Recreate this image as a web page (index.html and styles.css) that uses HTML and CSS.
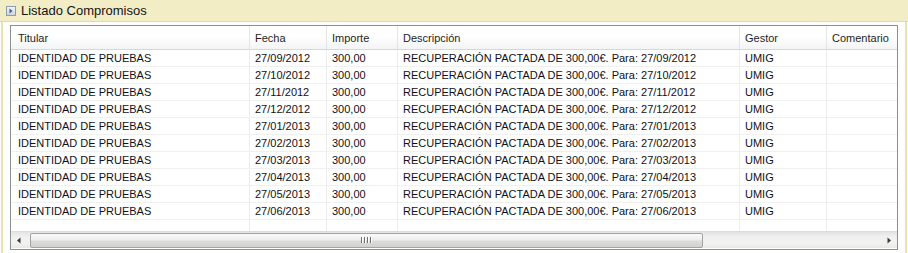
FILE: index.html
```html
<!DOCTYPE html>
<html lang="es">
<head>
<meta charset="utf-8">
<title>Listado Compromisos</title>
<link rel="stylesheet" href="styles.css">
</head>
<body>
<div class="panel">
  <div class="panel-head">
    <svg class="expander" width="10" height="10" viewBox="0 0 10 10">
      <defs>
        <linearGradient id="eg" x1="0" y1="0" x2="0" y2="1">
          <stop offset="0" stop-color="#f4f7fb"/>
          <stop offset="1" stop-color="#c9d3e2"/>
        </linearGradient>
      </defs>
      <rect x="0.5" y="0.5" width="9" height="9" fill="url(#eg)" stroke="#8d9bb3"/>
      <path d="M3.5 2.5 L6.5 5 L3.5 7.5 Z" fill="#4d5d7c"/>
    </svg>
    <span class="panel-title">Listado Compromisos</span>
  </div>
  <div class="panel-body">
    <div class="grid">
      <div class="row head">
        <div class="cell c1">Titular</div>
        <div class="cell">Fecha</div>
        <div class="cell">Importe</div>
        <div class="cell">Descripción</div>
        <div class="cell">Gestor</div>
        <div class="cell last">Comentario</div>
      </div>
      <div class="row"><div class="cell c1">IDENTIDAD DE PRUEBAS</div><div class="cell">27/09/2012</div><div class="cell">300,00</div><div class="cell">RECUPERACIÓN PACTADA DE 300,00€. Para: 27/09/2012</div><div class="cell">UMIG</div><div class="cell last"></div></div>
      <div class="row"><div class="cell c1">IDENTIDAD DE PRUEBAS</div><div class="cell">27/10/2012</div><div class="cell">300,00</div><div class="cell">RECUPERACIÓN PACTADA DE 300,00€. Para: 27/10/2012</div><div class="cell">UMIG</div><div class="cell last"></div></div>
      <div class="row"><div class="cell c1">IDENTIDAD DE PRUEBAS</div><div class="cell">27/11/2012</div><div class="cell">300,00</div><div class="cell">RECUPERACIÓN PACTADA DE 300,00€. Para: 27/11/2012</div><div class="cell">UMIG</div><div class="cell last"></div></div>
      <div class="row"><div class="cell c1">IDENTIDAD DE PRUEBAS</div><div class="cell">27/12/2012</div><div class="cell">300,00</div><div class="cell">RECUPERACIÓN PACTADA DE 300,00€. Para: 27/12/2012</div><div class="cell">UMIG</div><div class="cell last"></div></div>
      <div class="row"><div class="cell c1">IDENTIDAD DE PRUEBAS</div><div class="cell">27/01/2013</div><div class="cell">300,00</div><div class="cell">RECUPERACIÓN PACTADA DE 300,00€. Para: 27/01/2013</div><div class="cell">UMIG</div><div class="cell last"></div></div>
      <div class="row"><div class="cell c1">IDENTIDAD DE PRUEBAS</div><div class="cell">27/02/2013</div><div class="cell">300,00</div><div class="cell">RECUPERACIÓN PACTADA DE 300,00€. Para: 27/02/2013</div><div class="cell">UMIG</div><div class="cell last"></div></div>
      <div class="row"><div class="cell c1">IDENTIDAD DE PRUEBAS</div><div class="cell">27/03/2013</div><div class="cell">300,00</div><div class="cell">RECUPERACIÓN PACTADA DE 300,00€. Para: 27/03/2013</div><div class="cell">UMIG</div><div class="cell last"></div></div>
      <div class="row"><div class="cell c1">IDENTIDAD DE PRUEBAS</div><div class="cell">27/04/2013</div><div class="cell">300,00</div><div class="cell">RECUPERACIÓN PACTADA DE 300,00€. Para: 27/04/2013</div><div class="cell">UMIG</div><div class="cell last"></div></div>
      <div class="row"><div class="cell c1">IDENTIDAD DE PRUEBAS</div><div class="cell">27/05/2013</div><div class="cell">300,00</div><div class="cell">RECUPERACIÓN PACTADA DE 300,00€. Para: 27/05/2013</div><div class="cell">UMIG</div><div class="cell last"></div></div>
      <div class="row"><div class="cell c1">IDENTIDAD DE PRUEBAS</div><div class="cell">27/06/2013</div><div class="cell">300,00</div><div class="cell">RECUPERACIÓN PACTADA DE 300,00€. Para: 27/06/2013</div><div class="cell">UMIG</div><div class="cell last"></div></div>
      <div class="row filler">
        <div class="cell c1"></div><div class="cell"></div><div class="cell"></div><div class="cell"></div><div class="cell"></div><div class="cell last"></div>
      </div>
      <div class="hscroll">
        <div class="sb-btn">
          <svg width="17" height="17" viewBox="0 0 17 17"><path d="M9.5 5.5 L6 8.5 L9.5 11.5 Z" fill="#3a3a3a"/></svg>
        </div>
        <div class="sb-track">
          <div class="sb-thumb">
            <span class="grip"></span><span class="grip"></span><span class="grip"></span><span class="grip"></span>
          </div>
        </div>
        <div class="sb-btn">
          <svg width="17" height="17" viewBox="0 0 17 17"><path d="M7.5 5.5 L11 8.5 L7.5 11.5 Z" fill="#3a3a3a"/></svg>
        </div>
      </div>
    </div>
  </div>
</div>
</body>
</html>
```
FILE: styles.css
```css
* { box-sizing: border-box; }
html, body {
  margin: 0;
  padding: 0;
  background: #ffffff;
}
body {
  font-family: "Liberation Sans", Arial, sans-serif;
  width: 908px;
  height: 253px;
  overflow: hidden;
}
.panel {
  width: 908px;
  height: 253px;
  display: flex;
  flex-direction: column;
}
.panel-head {
  height: 22px;
  background: #f2edc5;
  border-bottom: 1px solid #e2d9a2;
  display: flex;
  align-items: center;
  padding-left: 6px;
}
.expander { display: block; margin-top: 1px; }
.panel-title {
  font-size: 13px;
  color: #141414;
  margin-left: 5px;
  line-height: 16px;
  margin-top: 1px;
}
.panel-body {
  flex: 1;
  margin: 0 1px;
  border-left: 2px solid #ece3ac;
  border-right: 2px solid #ece3ac;
  background: #fefefc;
  padding: 3px 7px 3px 7px;
}
.grid {
  height: 225px;
  border: 1px solid #8a8e95;
  background: #ffffff;
  display: flex;
  flex-direction: column;
  overflow: hidden;
}
.row {
  display: grid;
  grid-template-columns: 239px 77px 71px 342px 87px 1fr;
  height: 17px;
  border-bottom: 1px solid #f0f0f0;
  font-size: 11px;
  color: #101018;
}
.row.head {
  height: 24px;
  background: linear-gradient(#ffffff 0%, #ffffff 45%, #f3f4f6 100%);
  border-bottom: 1px solid #d6d7d9;
  color: #1e1e1e;
}
.row.filler {
  flex: 1;
  border-bottom: none;
}
.cell {
  border-right: 1px solid #ececec;
  padding-left: 5px;
  white-space: nowrap;
  overflow: hidden;
  display: flex;
  align-items: center;
}
.row.head .cell { border-right-color: #e4e5e7; }
.cell.c1 { padding-left: 7px; }
.cell.last { border-right: none; }
.hscroll {
  height: 17px;
  flex: none;
  display: flex;
  background: linear-gradient(#e3e3e3 0%, #f0f0f0 30%, #f2f2f2 70%, #e8e8e8 100%);
  border-top: 1px solid #dcdcdc;
  margin-bottom: 1px;
}
.sb-btn {
  width: 17px;
  height: 16px;
  flex: none;
}
.sb-btn svg { display: block; }
.sb-track {
  flex: 1;
  display: flex;
  align-items: center;
}
.sb-thumb {
  margin-left: 2px;
  width: 673px;
  height: 15px;
  border: 1px solid #a3a3a3;
  border-radius: 2px;
  background: linear-gradient(#fafafa 0%, #ededed 45%, #dcdcdc 55%, #d2d2d2 100%);
  display: flex;
  justify-content: center;
  align-items: center;
  gap: 1px;
}
.grip {
  width: 1px;
  height: 6px;
  background: #6e6e6e;
  box-shadow: 1px 0 0 #ffffff;
  margin-right: 1px;
}
```
